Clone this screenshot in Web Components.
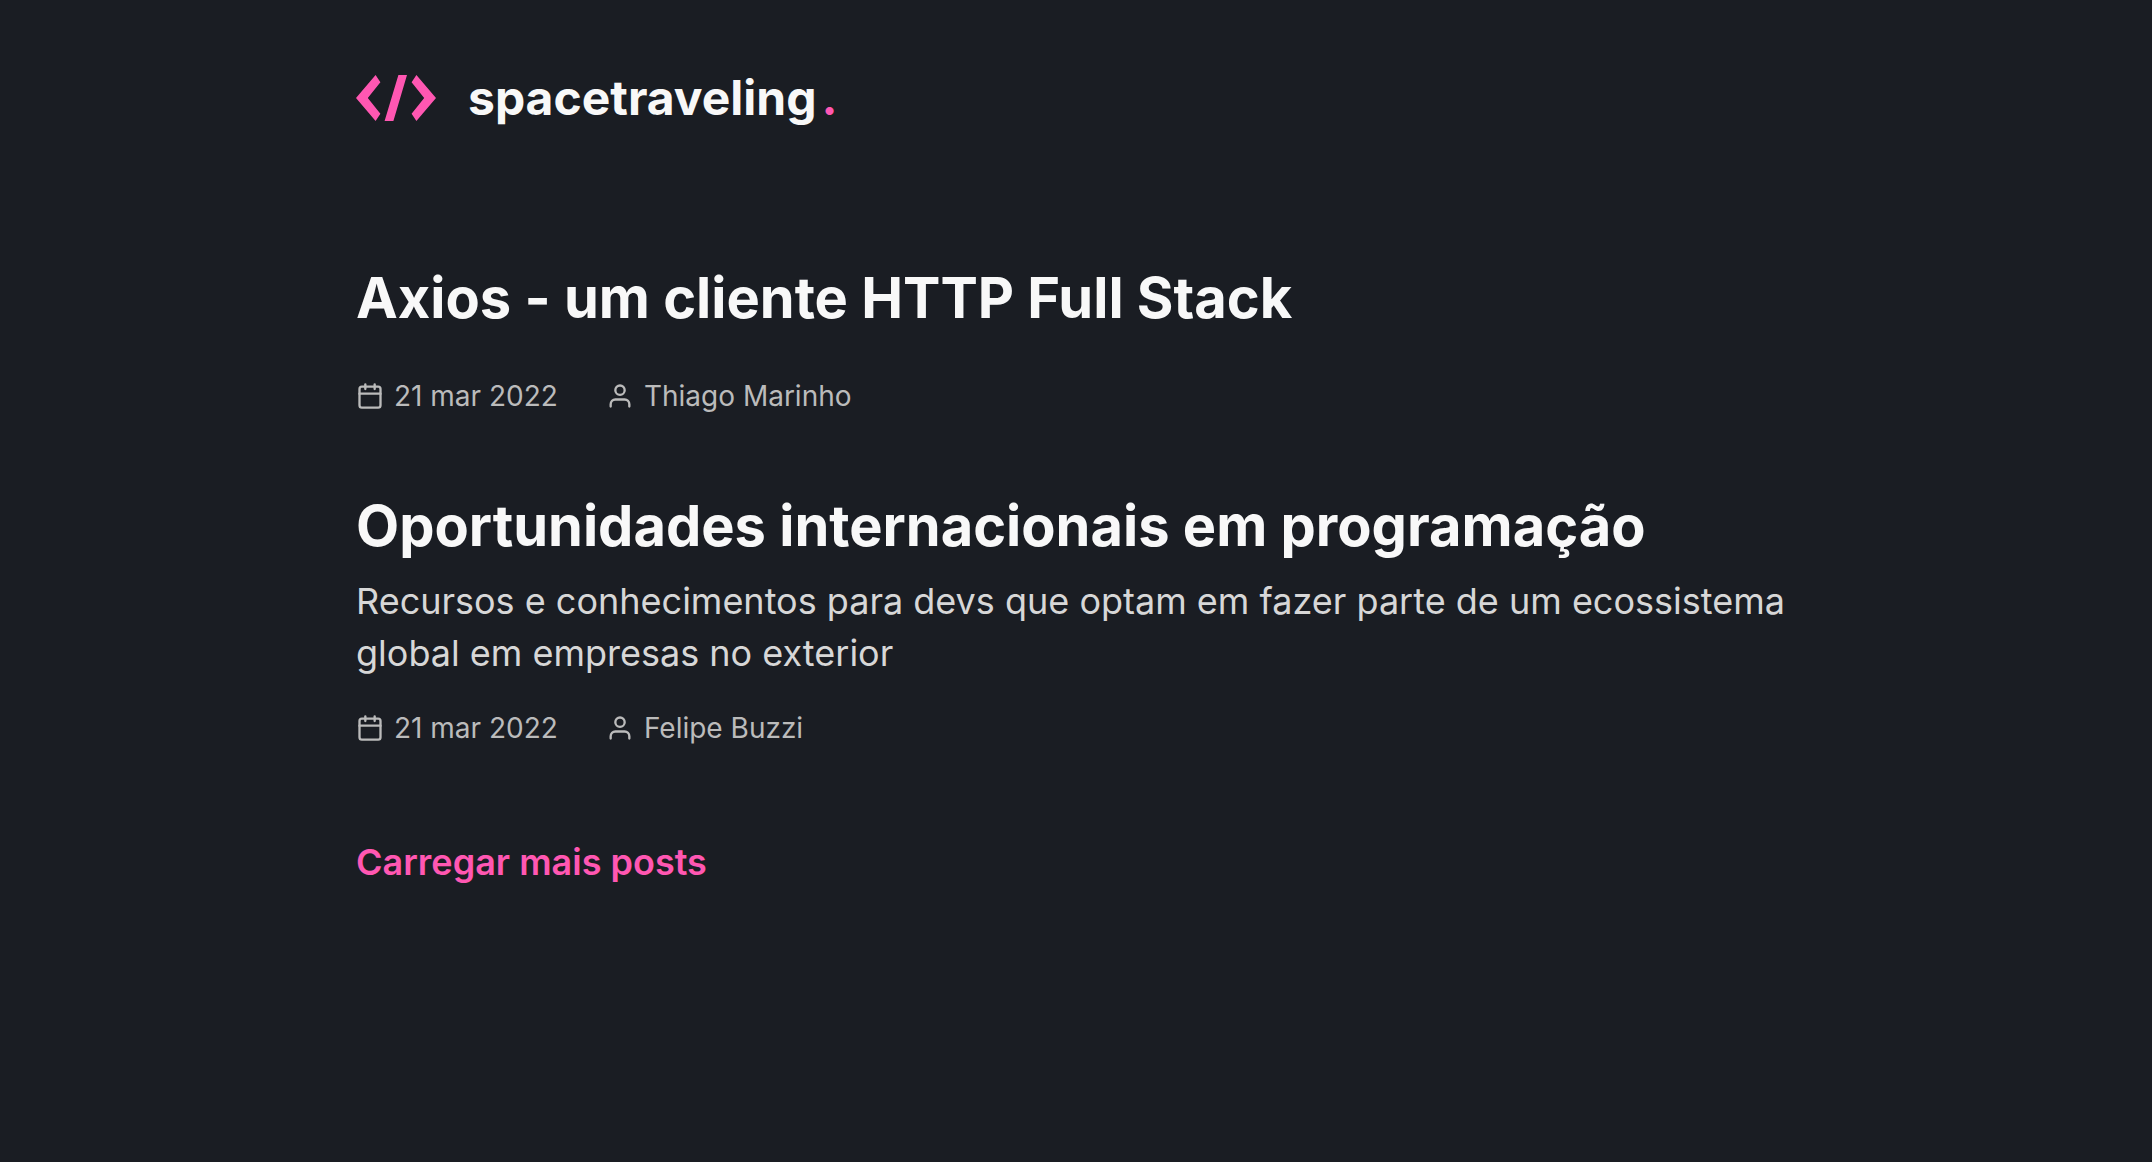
<!DOCTYPE html>
<html lang="pt-BR">
<head>
<meta charset="utf-8">
<title>Home | spacetraveling</title>
<style>
body { margin: 0; background: #1a1d23; color: #f8f8f8; font-family: Inter, sans-serif; }
</style>
</head>
<body>
<st-home></st-home>
<script>
class StLogo extends HTMLElement {
  connectedCallback() {
    this.attachShadow({ mode: 'open' }).innerHTML = `
      <style>
        :host { display: block; }
        a { display: flex; align-items: center; gap: 32px; color: inherit; text-decoration: none; font-size: 48px; line-height: 56px; font-weight: 700; }
        svg { flex: none; width: 80px; height: 46px; }
        .name { display: flex; gap: 5px; }
        .dot { color: #ff57b2; }
      </style>
      <a href="#" aria-label="spacetraveling"><svg viewBox="0 0 80 46" fill="#ff57b2"><path d="M19.6 0 24.4 7.3 11.8 23 24.4 38.7 19.6 46 0 23ZM42.4 0H51L37.4 46H28.6ZM60.4 0 80 23 60.4 46 55.6 38.7 68.2 23 55.6 7.3Z"/></svg><span class="name"><span>spacetraveling</span><span class="dot">.</span></span></a>`;
  }
}
class StIcon extends HTMLElement {
  connectedCallback() {
    const shapes = {
      calendar: '<rect x="3" y="4" width="18" height="18" rx="2"/><path d="M16 2v4M8 2v4M3 10h18"/>',
      user: '<path d="M20 21v-2a4 4 0 0 0-4-4H8a4 4 0 0 0-4 4v2"/><circle cx="12" cy="7" r="4"/>'
    };
    this.attachShadow({ mode: 'open' }).innerHTML = `
      <style>
        :host { display: block; }
        svg { display: block; width: 28px; height: 28px; fill: none; stroke: currentColor; stroke-width: 2; stroke-linecap: round; stroke-linejoin: round; }
      </style>
      <svg viewBox="0 0 24 24">${shapes[this.getAttribute('name')]}</svg>`;
  }
}
class StPost extends HTMLElement {
  connectedCallback() {
    this.attachShadow({ mode: 'open' }).innerHTML = `
      <style>
        :host { display: block; }
        a { display: flex; flex-direction: column; color: inherit; text-decoration: none; }
        h2 { margin: 0; font-size: 56px; line-height: 68px; font-weight: 700; }
        p { margin: 15px 0 32px; font-size: 36px; line-height: 52px; color: #d7d7d7; }
        ul { display: flex; gap: 48px; margin: 0; padding: 0; list-style: none; font-size: 28px; line-height: 34px; color: #bbbbbb; }
        li { display: flex; align-items: center; gap: 10px; }
      </style>
      <a href="#"><h2><slot name="title"></slot></h2><p><slot name="subtitle"></slot></p>
      <ul><li><st-icon name="calendar"></st-icon><slot name="date"></slot></li><li><st-icon name="user"></st-icon><slot name="author"></slot></li></ul></a>`;
  }
}
class StHome extends HTMLElement {
  connectedCallback() {
    this.attachShadow({ mode: 'open' }).innerHTML = `
      <style>
        :host { display: block; max-width: 1440px; margin: 0 auto; padding: 70px 0; }
        main { display: flex; flex-direction: column; gap: 79px; margin-top: 138px; }
        button { align-self: flex-start; margin: 16px 0 0; padding: 0; border: 0; background: none; color: #ff57b2; font: 600 36px/44px Inter, sans-serif; cursor: pointer; }
      </style>
      <header><st-logo></st-logo></header>
      <main>
        <st-post><span slot="title">Axios - um cliente HTTP Full Stack</span><span slot="date">21 mar 2022</span><span slot="author">Thiago Marinho</span></st-post>
        <st-post><span slot="title">Oportunidades internacionais em programação</span><span slot="subtitle">Recursos e conhecimentos para devs que optam em fazer parte de um ecossistema global em empresas no exterior</span><span slot="date">21 mar 2022</span><span slot="author">Felipe Buzzi</span></st-post>
        <button type="button">Carregar mais posts</button>
      </main>`;
  }
}
customElements.define('st-logo', StLogo);
customElements.define('st-icon', StIcon);
customElements.define('st-post', StPost);
customElements.define('st-home', StHome);
</script>
</body>
</html>
